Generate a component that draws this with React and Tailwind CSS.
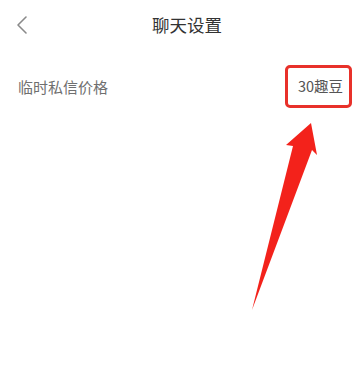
export default function App() {
  return (
    <div
      className="relative w-[362px] h-[381px] bg-white overflow-hidden"
      style={{ fontFamily: '"Noto Sans CJK SC", "Noto Sans", sans-serif' }}
    >
      {/* Header */}
      <div className="grid grid-cols-[1fr_auto_1fr] items-center h-[50px] pl-3">
        <div className="flex items-center">
          <svg width="14" height="20" viewBox="0 0 14 20" className="ml-[4px]">
            <polyline
              points="10,2 2,10 10,18"
              fill="none"
              stroke="#8a8a8a"
              strokeWidth="1.6"
              strokeLinecap="round"
              strokeLinejoin="round"
            />
          </svg>
        </div>
        <h1 className="text-[17.5px] text-[#333] leading-none">聊天设置</h1>
        <div />
      </div>

      {/* Price row */}
      <div className="flex items-center justify-between pl-[18px] pr-[10px] mt-[15px]">
        <span className="text-[15px] text-[#6f6f6f] leading-none">临时私信价格</span>
        <div className="flex items-center justify-end w-[67px] h-[43px] border-[3px] border-[#e8312a] rounded-[5px] pr-[6px]">
          <span className="text-[14.5px] text-[#555] leading-none">30趣豆</span>
        </div>
      </div>

      {/* Annotation arrow */}
      <svg
        className="absolute left-0 top-0 pointer-events-none"
        width="362"
        height="381"
        viewBox="0 0 362 381"
      >
        <polygon
          points="252,310 293,146 286,145 311,123 317,155 312,150"
          fill="#f3221b"
        />
      </svg>
    </div>
  );
}
